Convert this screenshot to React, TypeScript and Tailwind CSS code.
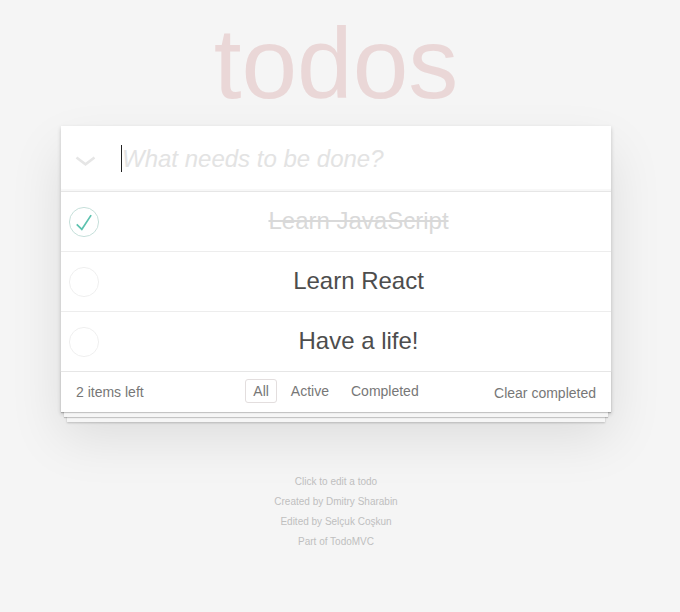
import React from "react";

function Toggle({ checked }: { checked: boolean }) {
  return (
    <svg width="30" height="30" viewBox="-1.5 -1.5 103 103">
      <circle
        cx="50"
        cy="50"
        r="50"
        fill="none"
        stroke={checked ? "#bddad5" : "#ededed"}
        strokeWidth="3"
      />
      {checked && (
        <path d="M72 25L42 71 27 56l-4 4 20 20 34-52z" fill="#5dc2af" />
      )}
    </svg>
  );
}

const todos = [
  { title: "Learn JavaScript", done: true },
  { title: "Learn React", done: false },
  { title: "Have a life!", done: false },
];

export default function App() {
  return (
    <div
      className="min-h-[612px] bg-[#f5f5f5] text-[14px] text-[#4d4d4d]"
      style={{ fontFamily: '"Liberation Sans", Arial, Helvetica, sans-serif' }}
    >
      <div className="w-[672px] pt-[13px]">
        <h1 className="h-[100px] text-center text-[100px] leading-[100px] font-normal text-[rgba(175,47,47,0.15)]">
          todos
        </h1>
        <section className="mx-auto mt-[13px] w-[550px] bg-white shadow-[0_2px_4px_0_rgba(0,0,0,0.2),0_25px_50px_0_rgba(0,0,0,0.1)]">
          <header className="flex h-[66px] items-center border-b border-[#e6e6e6] shadow-[inset_0_-2px_1px_rgba(0,0,0,0.03)]">
            <div className="flex w-[60px] items-center pl-[14px] pt-[4px]">
              <svg width="21" height="10" viewBox="0 0 21 10">
                <polyline
                  points="1.5,1.5 10.5,8.3 19.5,1.5"
                  fill="none"
                  stroke="#e6e6e6"
                  strokeWidth="2.6"
                />
              </svg>
            </div>
            <div className="flex items-center">
              <span className="h-[27px] w-px bg-[#222]" />
              <span className="text-[24px] italic leading-[34px] text-[#e3e3e3]">
                What needs to be done?
              </span>
            </div>
          </header>
          <ul>
            {todos.map((t, i) => (
              <li
                key={t.title}
                className={
                  "flex items-center" +
                  (i < todos.length - 1
                    ? " h-[60px] border-b border-[#ededed]"
                    : " h-[59px]")
                }
              >
                <div className="flex w-[60px] items-center pl-[8px]">
                  <Toggle checked={t.done} />
                </div>
                <span
                  className={
                    "flex-1 pb-[2px] pr-[15px] text-center text-[24px] leading-[29px] " +
                    (t.done ? "text-[#d9d9d9] line-through" : "text-[#4d4d4d]")
                  }
                >
                  {t.title}
                </span>
              </li>
            ))}
          </ul>
          <footer className="grid h-[41px] grid-cols-[1fr_auto_1fr] items-center border-t border-[#e6e6e6] px-[15px] text-[14px] leading-[20px] text-[#777] shadow-[0_1px_1px_rgba(0,0,0,0.2),0_8px_0_-3px_#f6f6f6,0_9px_1px_-3px_rgba(0,0,0,0.2),0_16px_0_-6px_#f6f6f6,0_17px_2px_-6px_rgba(0,0,0,0.2)]">
            <span>2 items left</span>
            <ul className="flex items-center -mt-[2px]">
              <li className="m-[3px] rounded-[3px] border border-[#e3dede] px-[7px] py-[1px]">
                All
              </li>
              <li className="m-[3px] rounded-[3px] border border-transparent px-[7px] py-[1px]">
                Active
              </li>
              <li className="m-[3px] rounded-[3px] border border-transparent px-[7px] py-[1px]">
                Completed
              </li>
            </ul>
            <span className="justify-self-end pt-[1px]">Clear completed</span>
          </footer>
        </section>
        <div className="mt-[60px] text-center text-[10px] leading-[20px] text-[#bfbfbf]">
          <p>Click to edit a todo</p>
          <p>Created by Dmitry Sharabin</p>
          <p>Edited by Selçuk Coşkun</p>
          <p>Part of TodoMVC</p>
        </div>
      </div>
    </div>
  );
}
